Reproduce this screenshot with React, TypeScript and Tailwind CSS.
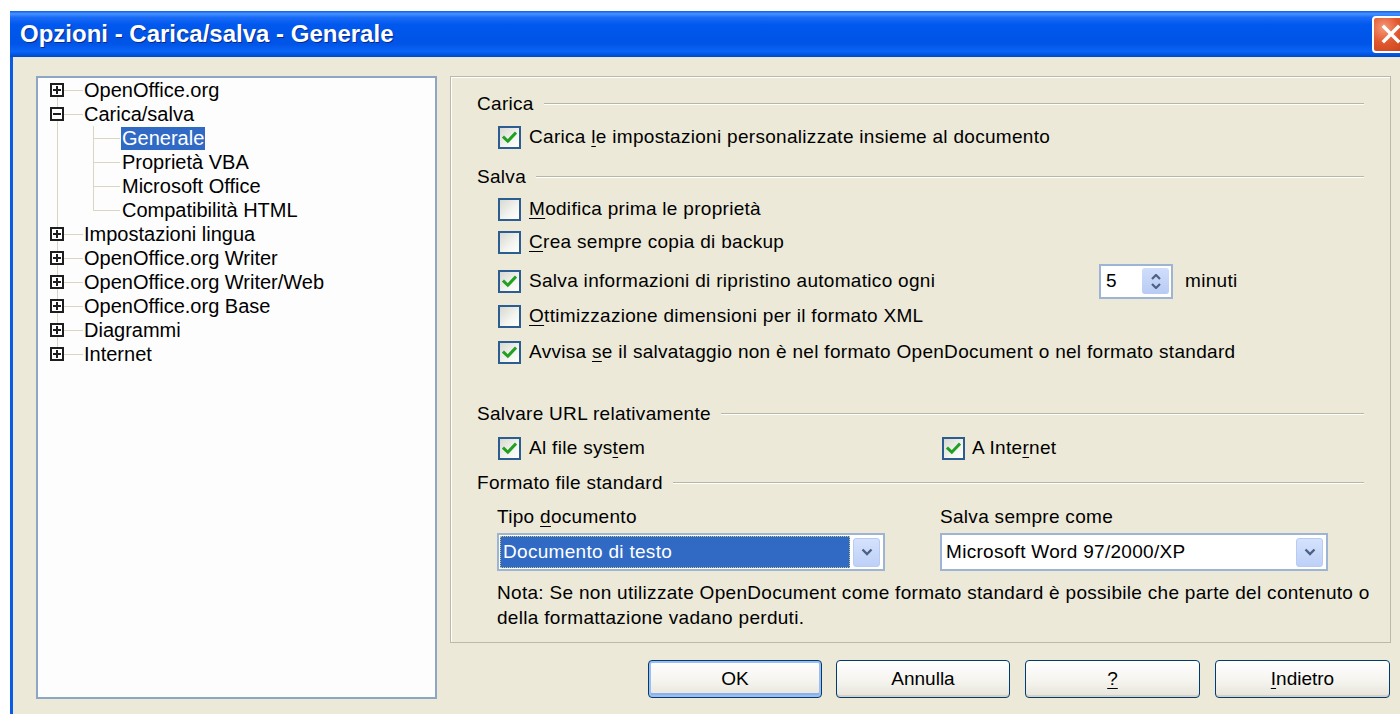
import React from "react";

type TreeNode = { label: string; open?: boolean; children?: { label: string; selected?: boolean }[] };

const tree: TreeNode[] = [
  { label: "OpenOffice.org" },
  {
    label: "Carica/salva",
    open: true,
    children: [
      { label: "Generale", selected: true },
      { label: "Proprietà VBA" },
      { label: "Microsoft Office" },
      { label: "Compatibilità HTML" },
    ],
  },
  { label: "Impostazioni lingua" },
  { label: "OpenOffice.org Writer" },
  { label: "OpenOffice.org Writer/Web" },
  { label: "OpenOffice.org Base" },
  { label: "Diagrammi" },
  { label: "Internet" },
];

function Mn({ children }: { children: React.ReactNode }) {
  return <span className="underline decoration-1 underline-offset-[3px]">{children}</span>;
}

function Expander({ open }: { open?: boolean }) {
  return (
    <span className="absolute left-[12px] top-1/2 -translate-y-1/2 w-[14px] h-[14px] border-2 border-[#1e1e1e] bg-white flex items-center justify-center">
      <span className="relative w-[8px] h-[8px] flex items-center justify-center">
        <span className="absolute w-[8px] h-[2px] bg-[#1e1e1e]" />
        {!open && <span className="absolute w-[2px] h-[8px] bg-[#1e1e1e]" />}
      </span>
    </span>
  );
}

function TreeView() {
  const rows: React.ReactNode[] = [];
  tree.forEach((node, i) => {
    const first = i === 0;
    const last = i === tree.length - 1;
    rows.push(
      <div key={node.label} className="relative h-6 flex items-center pl-[46px]">
        <span
          className={`absolute left-[19px] w-px bg-[#dcd6c0] ${first ? "top-1/2 bottom-0" : last ? "top-0 h-1/2" : "top-0 bottom-0"}`}
        />
        <span className="absolute left-[26px] top-1/2 w-[19px] h-px bg-[#dcd6c0]" />
        <Expander open={node.open} />
        <span className="whitespace-nowrap">{node.label}</span>
      </div>
    );
    if (node.open && node.children) {
      node.children.forEach((c, j) => {
        const lastChild = j === node.children!.length - 1;
        rows.push(
          <div key={c.label} className="relative h-6 flex items-center pl-[83px]">
            <span className="absolute left-[19px] top-0 bottom-0 w-px bg-[#dcd6c0]" />
            <span className={`absolute left-[55px] w-px bg-[#dcd6c0] ${lastChild ? "top-0 h-1/2" : "top-0 bottom-0"}`} />
            <span className="absolute left-[55px] top-1/2 w-[27px] h-px bg-[#dcd6c0]" />
            <span
              className={`whitespace-nowrap px-px leading-[23px] ${c.selected ? "bg-[#316ac5] text-white" : ""}`}
            >
              {c.label}
            </span>
          </div>
        );
      });
    }
  });
  return (
    <div className="w-[401px] h-[623px] border-2 border-[#8ea6c6] bg-[#fdfdfd] shrink-0 text-[20px]">
      <div className="flex flex-col">{rows}</div>
    </div>
  );
}

function CheckBox({ checked }: { checked?: boolean }) {
  return (
    <span className="w-[23px] h-[23px] shrink-0 border-2 border-[#2c5d91] bg-[linear-gradient(135deg,#d9d9d2_0%,#f4f4f0_60%,#ffffff_100%)] flex items-center justify-center">
      {checked && (
        <svg width="15" height="13" viewBox="0 0 15 13">
          <path d="M2 6.5 L5.8 10.2 L13 2.6" fill="none" stroke="#21a121" strokeWidth="3" strokeLinecap="square" />
        </svg>
      )}
    </span>
  );
}

function CheckRow({
  checked,
  children,
  mt,
}: {
  checked?: boolean;
  children: React.ReactNode;
  mt: string;
}) {
  return (
    <div className={`h-[26px] flex items-center pl-[47px] ${mt}`}>
      <CheckBox checked={checked} />
      <span className="ml-[8px] whitespace-nowrap">{children}</span>
    </div>
  );
}

function GroupHeader({ title, mt }: { title: string; mt: string }) {
  return (
    <div className={`h-6 flex items-center pl-[26px] pr-[26px] ${mt}`}>
      <span className="whitespace-nowrap">{title}</span>
      <span className="ml-[10px] flex-1 h-[2px] border-t border-[#bab6a4] border-b border-b-white" />
    </div>
  );
}

function DropArrow() {
  return (
    <span className="w-[27px] h-[29px] rounded-[3px] border border-[#b9cbf1] bg-[linear-gradient(180deg,#d5e2fc_0%,#bdd0f8_100%)] flex items-center justify-center shrink-0">
      <svg width="12" height="8" viewBox="0 0 12 8">
        <path d="M1.5 1.5 L6 6 L10.5 1.5" fill="none" stroke="#4d6185" strokeWidth="2.4" />
      </svg>
    </span>
  );
}

function SpinBox() {
  return (
    <div className="w-[74px] h-[35px] border-2 border-[#9eb4d4] bg-white flex items-center pl-[5px] pr-[2px] shrink-0">
      <span className="flex-1">5</span>
      <span className="w-[27px] h-[26px] rounded-[3px] bg-[linear-gradient(180deg,#d0defb_0%,#b8cbf4_100%)] flex flex-col items-center justify-center gap-[3px]">
        <svg width="10" height="6" viewBox="0 0 10 6">
          <path d="M1 5 L5 1 L9 5" fill="none" stroke="#4d6185" strokeWidth="2.2" />
        </svg>
        <svg width="10" height="6" viewBox="0 0 10 6">
          <path d="M1 1 L5 5 L9 1" fill="none" stroke="#4d6185" strokeWidth="2.2" />
        </svg>
      </span>
    </div>
  );
}

function XpButton({ children, def, w, ml }: { children: React.ReactNode; def?: boolean; w: string; ml: string }) {
  return (
    <div
      className={`${w} ${ml} h-[38px] rounded-[4px] border border-[#003c74] bg-[linear-gradient(180deg,#ffffff_0%,#f5f4ef_55%,#e6e4d9_100%)] flex items-center justify-center ${
        def ? "shadow-[inset_0_0_0_2px_#9ebdf0,inset_0_-2px_0_2px_#8cb0ec]" : "shadow-[inset_0_-2px_0_#d6d0c5]"
      }`}
    >
      {children}
    </div>
  );
}

function OptionsPanel() {
  return (
    <div className="w-[941px] h-[567px] border border-[#bdb9a8] shadow-[inset_1px_1px_0_#ffffff] bg-[#ece9d8] flex flex-col tracking-[0.3px]">
      <GroupHeader title="Carica" mt="mt-[15px]" />
      <CheckRow checked mt="mt-[8px]">
        Carica <Mn>l</Mn>e impostazioni personalizzate insieme al documento
      </CheckRow>
      <GroupHeader title="Salva" mt="mt-[15px]" />
      <CheckRow mt="mt-[7px]">
        <Mn>M</Mn>odifica prima le proprietà
      </CheckRow>
      <CheckRow mt="mt-[7px]">
        <Mn>C</Mn>rea sempre copia di backup
      </CheckRow>
      <div className="h-[26px] flex items-center pl-[47px] mt-[13px]">
        <div className="w-[601px] flex items-center">
          <CheckBox checked />
          <span className="ml-[8px] whitespace-nowrap">Salva informazioni di ripristino automatico ogni</span>
        </div>
        <SpinBox />
        <span className="ml-[12px]">minuti</span>
      </div>
      <CheckRow mt="mt-[9px]">
        <Mn>O</Mn>ttimizzazione dimensioni per il formato XML
      </CheckRow>
      <CheckRow checked mt="mt-[10px]">
        Avvisa <Mn>s</Mn>e il salvataggio non è nel formato OpenDocument o nel formato standard
      </CheckRow>
      <GroupHeader title="Salvare URL relativamente" mt="mt-[37px]" />
      <div className="h-[26px] flex items-center pl-[47px] mt-[9px]">
        <div className="w-[444px] flex items-center">
          <CheckBox checked />
          <span className="ml-[8px] whitespace-nowrap">
            Al file sys<Mn>t</Mn>em
          </span>
        </div>
        <CheckBox checked />
        <span className="ml-[7px] whitespace-nowrap">
          A Inte<Mn>r</Mn>net
        </span>
      </div>
      <GroupHeader title="Formato file standard" mt="mt-[10px]" />
      <div className="flex pl-[46px] mt-[10px]">
        <div className="w-[388px] flex flex-col">
          <div className="h-6 flex items-center">
            <span className="whitespace-nowrap">
              Tipo <Mn>d</Mn>ocumento
            </span>
          </div>
          <div className="mt-[4px] h-[38px] border-2 border-[#9eb4d4] bg-white flex items-center pl-[1px] pr-[3px]">
            <span className="flex-1 h-[32px] bg-[#316ac5] text-white outline-1 outline-dotted outline-[#c9c27a] -outline-offset-1 flex items-center pl-[3px] mr-[3px]">
              Documento di testo
            </span>
            <DropArrow />
          </div>
        </div>
        <div className="w-[388px] ml-[55px] flex flex-col">
          <div className="h-6 flex items-center">Salva sempre come</div>
          <div className="mt-[4px] h-[38px] border-2 border-[#9eb4d4] bg-white flex items-center pl-[4px] pr-[3px]">
            <span className="flex-1">Microsoft Word 97/2000/XP</span>
            <DropArrow />
          </div>
        </div>
      </div>
      <p className="pl-[46px] mt-[9px] leading-[25px] whitespace-nowrap">
        Nota: Se non utilizzate OpenDocument come formato standard è possibile che parte del contenuto o
        <br />
        della formattazione vadano perduti.
      </p>
    </div>
  );
}

export default function App() {
  return (
    <div className="w-[1400px] h-[714px] overflow-hidden bg-white pt-[11px] font-['Liberation_Sans',Arial,sans-serif] text-[19px] text-black">
      <div className="ml-[10px] w-[1430px] h-[703px] bg-[#0a5ce8] flex flex-col">
        {/* title bar */}
        <div className="h-[46px] shrink-0 flex items-center bg-[linear-gradient(180deg,#0a5fe8_0%,#4592ff_6%,#1a6af5_14%,#0058ee_30%,#0054e6_70%,#0a64f6_88%,#0048cc_100%)]">
          <span className="ml-[10px] text-white font-bold text-[24px] tracking-[0px] [text-shadow:1px_1px_0_#0b2a8a]">
            Opzioni - Carica/salva - Generale
          </span>
          <span className="ml-auto mr-[31px] w-[37px] h-[37px] rounded-[4px] border-2 border-white bg-[radial-gradient(circle_at_30%_30%,#f59a7a_0%,#e2582f_45%,#c2401a_100%)] flex items-center justify-center">
            <svg width="20" height="20" viewBox="0 0 20 20">
              <path d="M3 3 L17 17 M17 3 L3 17" stroke="#ffffff" strokeWidth="3.4" strokeLinecap="square" />
            </svg>
          </span>
        </div>
        {/* dialog body */}
        <div className="ml-[3px] flex-1 bg-[#ece9d8] flex pt-[19px] pl-[23px]">
          <TreeView />
          <div className="ml-[13px] flex flex-col">
            <OptionsPanel />
            <div className="mt-[17px] flex">
              <XpButton def w="w-[174px]" ml="ml-[198px]">
                OK
              </XpButton>
              <XpButton w="w-[174px]" ml="ml-[14px]">
                Annulla
              </XpButton>
              <XpButton w="w-[175px]" ml="ml-[15px]">
                <Mn>?</Mn>
              </XpButton>
              <XpButton w="w-[175px]" ml="ml-[15px]">
                <Mn>I</Mn>ndietro
              </XpButton>
            </div>
          </div>
        </div>
      </div>
    </div>
  );
}
